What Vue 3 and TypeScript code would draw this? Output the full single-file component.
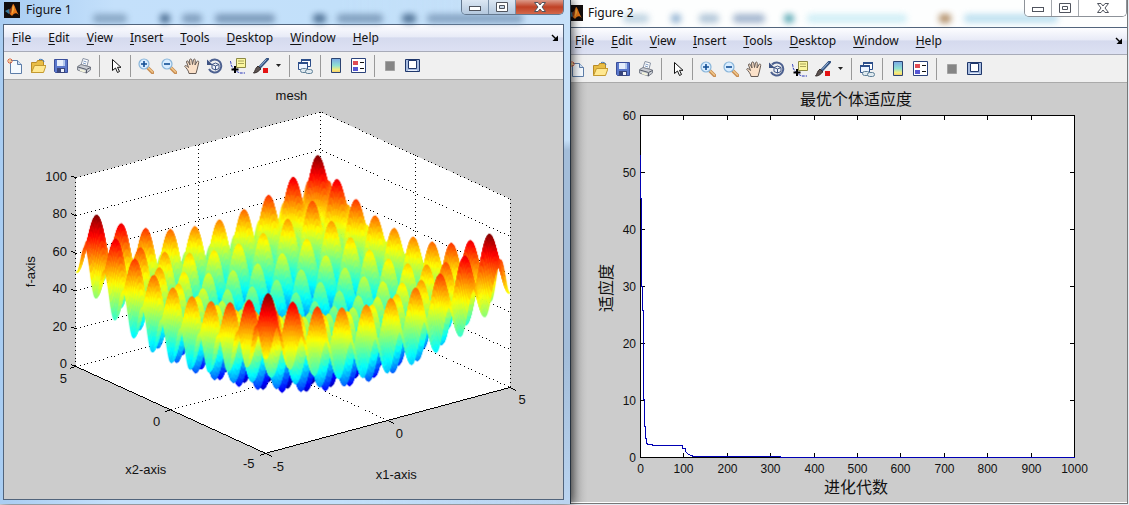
<script setup lang="ts">
import { onMounted, ref } from 'vue'

interface Smudge { x: number; w: number; c: string }
interface Fig {
  id: string
  title: string
  active: boolean
  smudges: Smudge[]
}

const figures: Fig[] = [
  {
    id: 'one', title: 'Figure 1', active: true,
    smudges: [
      { x: 90, w: 34, c: '#7f9ebc' }, { x: 157, w: 10, c: '#33567c' }, { x: 179, w: 20, c: '#7593b3' },
      { x: 212, w: 60, c: '#6f8dae' }, { x: 310, w: 13, c: '#3d6085' }, { x: 334, w: 46, c: '#7593b3' },
      { x: 399, w: 14, c: '#3d6085' }, { x: 424, w: 96, c: '#7c9aba' },
    ],
  },
  {
    id: 'two', title: 'Figure 2', active: false,
    smudges: [
      { x: 56, w: 26, c: '#b5cddd' }, { x: 104, w: 10, c: '#7fa6cb' }, { x: 132, w: 20, c: '#a5bdd2' },
      { x: 166, w: 32, c: '#93a9c6' }, { x: 217, w: 10, c: '#3f9aa8' }, { x: 240, w: 100, c: '#c9ecf5' },
      { x: 372, w: 12, c: '#a47a4c' }, { x: 397, w: 94, c: '#b4dcee' },
    ],
  },
]

const menus = ['File', 'Edit', 'View', 'Insert', 'Tools', 'Desktop', 'Window', 'Help']
const tools = [
  'New Figure', 'Open File', 'Save Figure', 'Print Figure', '|', 'Edit Plot', '|', 'Zoom In', 'Zoom Out', 'Pan',
  'Rotate 3D', 'Data Cursor', 'Brush', 'Brush options', '|', 'Link Plot', '|', 'Insert Colorbar', 'Insert Legend', '|',
  'Hide Plot Tools', 'Show Plot Tools',
]

// Oblique view of the 10 x 10 x 100 axes box.
const px = (x: number, y: number) => 266 + 24.5 * (x + 5) - 19 * (y + 5)
const py = (x: number, y: number, z: number) => 454 - 6.6 * (x + 5) - 8.7 * (y + 5) - 1.89 * z
const pt = (x: number, y: number, z: number) => `${px(x, y)},${py(x, y, z)}`
const box = [pt(-5, 5, 0), pt(-5, 5, 100), pt(5, 5, 100), pt(5, -5, 100), pt(5, -5, 0), pt(-5, -5, 0)].join(' ')

const grid: string[] = []
for (let z = 0; z <= 100; z += 20) grid.push(`M${pt(-5, 5, z)}L${pt(5, 5, z)}L${pt(5, -5, z)}`)
for (const x of [-5, 0, 5]) grid.push(`M${pt(x, 5, 0)}L${pt(x, 5, 100)}`)
for (const y of [0, -5]) grid.push(`M${pt(5, y, 0)}L${pt(5, y, 100)}`)
grid.push(`M${pt(0, 5, 0)}L${pt(0, -5, 0)}`, `M${pt(-5, 0, 0)}L${pt(5, 0, 0)}`)
const gridPath = grid.join('')

const ticks3d: string[] = []
for (let z = 0; z <= 100; z += 20) ticks3d.push(`M${pt(-5, 5, z)}l-5,-2`)
for (const v of [-5, 0, 5]) ticks3d.push(`M${pt(-5, v, 0)}l-6,2`, `M${pt(v, -5, 0)}l6,3`)
const tickPath = ticks3d.join('')
const zLabels = [0, 20, 40, 60, 80, 100].map(z => ({ z, y: 369 - 1.88 * z }))

const rastrigin = (x: number, y: number) =>
  20 + x * x + y * y - 10 * (Math.cos(2 * Math.PI * x) + Math.cos(2 * Math.PI * y))

function jet(t: number): string {
  const c = (o: number) => Math.round(255 * Math.max(0, Math.min(1, 1.5 - Math.abs(4 * t - o))))
  return `rgb(${c(3)},${c(2)},${c(1)})`
}

const surfaces = ref<HTMLCanvasElement[]>([])
onMounted(() => {
  const ctx = surfaces.value[0]?.getContext('2d')
  if (!ctx) return
  ctx.translate(-4, -80)
  ctx.lineWidth = 0.7
  const n = 200
  const at = (i: number) => -5 + (10 * i) / n
  for (let i = n - 1; i >= 0; i--) {
    for (let j = n - 1; j >= 0; j--) {
      const corners = [[i, j], [i + 1, j], [i + 1, j + 1], [i, j + 1]]
      ctx.beginPath()
      let sum = 0
      corners.forEach(([a, b], k) => {
        const x = at(a), y = at(b), z = rastrigin(x, y)
        sum += z
        if (k) ctx.lineTo(px(x, y), py(x, y, z))
        else ctx.moveTo(px(x, y), py(x, y, z))
      })
      ctx.closePath()
      const color = jet(sum / 4 / 80.7)
      ctx.fillStyle = color
      ctx.strokeStyle = color
      ctx.fill()
      ctx.stroke()
    }
  }
})

const xTicks = Array.from({ length: 11 }, (_, i) => ({ v: i * 100, x: Math.round(640 + i * 43.4) + 0.5 }))
const yTicks = Array.from({ length: 7 }, (_, i) => ({ v: i * 10, y: 457.5 - i * 57 }))
const tick2d = xTicks.map(t => `M${t.x},115.5v4M${t.x},457.5v-5`).join('') +
  yTicks.map(t => `M640.5,${t.y}h4M1074.5,${t.y}h-5`).join('')
const curve = 'M640.5,155V198H641.5V286H642.5V310H643.5V399H644.5V426H645.5V438H646.5V443L648,444.5H652V445.5H682.5V448.5H685.5V451.5L688,454L691,455.5L694,456.5H780.5V457.5H1074.5'
</script>

<template>
  <main class="desktop">
    <section v-for="(fig, n) in figures" :key="fig.id" class="window" :class="fig.id" :aria-label="fig.title">
      <header class="titlebar">
        <i v-for="s in fig.smudges" :key="s.x" class="smudge" :style="{ left: s.x + 'px', width: s.w + 'px', background: s.c }"></i>
        <svg class="logo" viewBox="0 0 16 16" aria-hidden="true">
          <rect width="16" height="16" fill="#120d0c" />
          <path d="M1 9 5 7 8 10 5 12Z" fill="#36799c" />
          <path d="M5 8 7 6 9 2 10 3 8 11 6 13Z" fill="#8d3a18" />
          <path d="M9 2C11 3 12 9 15 13 12 10 10 11 8 14L6 12C8 10 8 5 9 2Z" fill="#e97818" />
          <path d="M9 3C10 6 10 9 8 12 9 9 8 6 9 3Z" fill="#ffd25a" />
        </svg>
        <h1>{{ fig.title }}</h1>
        <div class="controls">
          <button type="button" aria-label="Minimize">
            <svg width="14" height="10"><rect x="1.5" y="4.5" width="11" height="4" fill="#fff" stroke="#50545e" /></svg>
          </button>
          <button type="button" aria-label="Maximize">
            <svg width="14" height="10"><path d="M1.500.5h11v9h-11zM4.500 3.500h5v3h-5z" fill="#fff" stroke="#50545e" fill-rule="evenodd" /></svg>
          </button>
          <button type="button" class="close" aria-label="Close">
            <svg width="14" height="10"><path d="M1.500.5h3.500l2 2.500 2-2.500h3.500L9 5l3.500 4.500H9L7 7 5 9.500H1.500L5 5z" fill="#fff" stroke="#50545e" /></svg>
          </button>
        </div>
      </header>

      <div class="client">
        <nav class="menubar" aria-label="Menu">
          <button v-for="m in menus" :key="m" type="button"><u>{{ m[0] }}</u>{{ m.slice(1) }}</button>
          <svg class="dock" width="8" height="8" aria-hidden="true"><path d="M1 1 5 5" stroke="#000" stroke-width="1.500" /><path d="M7 1.500V7H1.500z" fill="#000" /></svg>
        </nav>

        <div class="toolbar" role="toolbar" aria-label="Figure tools">
          <template v-for="(t, i) in tools" :key="i">
            <i v-if="t === '|'" class="sep"></i>
            <button v-else type="button" :aria-label="t" :class="{ caret: t === 'Brush options' }">
              <svg v-if="t === 'New Figure'" viewBox="0 0 16 16">
                <path d="M3.500 2.500h7l4 4v9h-11z" fill="#f5faff" stroke="#5d7da8" />
                <path d="M10.500 2.500v4h4" fill="#cfe0f3" stroke="#5d7da8" />
                <path d="M3 0v6M0 3h6M1 1l4 4M5 1 1 5" stroke="#e0693f" /><circle cx="3" cy="3" r="1" fill="#fff3a0" />
              </svg>
              <svg v-else-if="t === 'Open File'" viewBox="0 0 16 16">
                <path d="M1.500 14.500V4.500h5l1-2h6v11z" fill="#e9bd45" stroke="#b98b25" />
                <path d="M9 1.500q4-1 5 2.500" fill="none" stroke="#477ab8" />
                <path d="M1.500 14.500 4.500 7.500H16L13.500 14.500z" fill="#ffe891" stroke="#c49a30" />
              </svg>
              <svg v-else-if="t === 'Save Figure'" viewBox="0 0 16 16">
                <path d="M1.500 1.500h13v13h-12l-1-1z" fill="#5b78cc" stroke="#3a4e9a" />
                <path d="M4 2h8v6H4z" fill="#e6eefc" /><path d="M10 2h2v6h-2z" fill="#b5c9ee" />
                <path d="M4 10h8v5H4z" fill="#39457c" /><path d="M8 11h3v3H8z" fill="#eef2fb" />
              </svg>
              <svg v-else-if="t === 'Print Figure'" viewBox="0 0 16 16">
                <path d="M5 7 7 .5 12.500 2 11 8z" fill="#fff" stroke="#8a93a4" />
                <path d="M7.500 3l3 1M7 5l3 1" stroke="#7d9ac2" />
                <path d="M1.500 8.500 5 6.500 14.500 9v3l-4 3-9-3z" fill="#c9ccd3" stroke="#7d828d" />
                <path d="M2 9l8.500 2.500 4-2M10.500 12v3" fill="none" stroke="#555b68" /><path d="M4 12l5 1.500" stroke="#f3f3dc" stroke-width="2" />
              </svg>
              <svg v-else-if="t === 'Edit Plot'" viewBox="0 0 16 16">
                <path d="M5.500 1.500v11l3-2.500 2 4.500 2-1-2-4.200h3.500z" fill="#fff" stroke="#111" />
              </svg>
              <svg v-else-if="t === 'Zoom In' || t === 'Zoom Out'" viewBox="0 0 16 16">
                <path d="M9.500 9.500 14.500 14.500" stroke="#c78b50" stroke-width="3.500" stroke-linecap="round" />
                <path d="M9.500 9 14.500 14" stroke="#f1c78a" stroke-width="1.500" stroke-linecap="round" />
                <circle cx="6" cy="6" r="5" fill="#d9edff" stroke="#8ab6da" stroke-width="1.200" />
                <path :d="t === 'Zoom In' ? 'M3 6h6M6 3v6' : 'M3 6h6'" stroke="#114d94" stroke-width="1.600" />
              </svg>
              <svg v-else-if="t === 'Pan'" viewBox="0 0 16 16">
                <path d="M5 15.500C4.500 12 2 10 .7 8.300 1 7 2.500 7.500 4.500 9.500L2.500 4C2.500 2.500 4 2.500 4.500 4L6 7 5.500 2C6 .5 7.500.6 7.800 2L8.500 6.500 9.500 1.800C10 .5 11.500 1 11.300 2.500L11 7 13 3.500C13.500 2.500 15 3 14.700 4.500L13.500 10 12 15.500Z" fill="#fbe1c9" stroke="#665b55" />
              </svg>
              <svg v-else-if="t === 'Rotate 3D'" viewBox="0 0 16 16">
                <path d="M3 3.500A6.500 6.500 0 1 1 2 11" fill="none" stroke="#4d6190" stroke-width="2" />
                <path d="M0 1.500V7h6z" fill="#3e5383" />
                <path d="M5 6.500 8.500 5 12 6.500v4L8.500 12 5 10.500zM5 6.500 8.500 8 12 6.500M8.500 8v4" fill="#eff3fa" stroke="#3e5383" />
              </svg>
              <svg v-else-if="t === 'Data Cursor'" viewBox="0 0 16 16">
                <path d="M0 3q1 1 1 3t3 5 6 4h5" fill="none" stroke="#2735b9" stroke-dasharray="3 1" />
                <path d="M6.500.5h9v9h-9z" fill="#fbf7a0" stroke="#8d8a45" /><path d="M8 3h6M8 5.500h6" stroke="#aaa55c" />
                <path d="M5 8v7M1.500 11.500h7" stroke="#000" stroke-width="2" />
              </svg>
              <svg v-else-if="t === 'Brush'" viewBox="0 0 16 16">
                <path d="M14.500 1 7 9" stroke="#31507e" stroke-width="3" stroke-linecap="round" /><path d="M13.500 1.500 7 8.500" stroke="#9dbbe0" />
                <path d="M5 8 8 11C6 12 5 15 .5 15 2.500 13 2 10 5 8Z" fill="#5c5250" stroke="#352d2c" />
                <path d="M10 10h5v5h-5z" fill="#e41313" />
              </svg>
              <svg v-else-if="t === 'Brush options'" viewBox="0 0 6 4"><path d="M0 0h5L2.500 3z" fill="#222" /></svg>
              <svg v-else-if="t === 'Link Plot'" viewBox="0 0 16 16">
                <path d="M4.500 1.500h9v7h-9z" fill="#fff" stroke="#2c4e8a" /><path d="M4 2h10" stroke="#2c4e8a" stroke-width="2" />
                <path d="M1.500 4.500h9v7h-9z" fill="#eef5ff" stroke="#2c4e8a" /><path d="M1 5h10" stroke="#2c4e8a" stroke-width="2" />
                <rect x="3.500" y="10.500" width="7" height="4" rx="2" fill="#dfe9ef" stroke="#5f8098" />
                <rect x="8.500" y="11.500" width="7" height="4" rx="2" fill="#dfe9ef" stroke="#5f8098" />
              </svg>
              <svg v-else-if="t === 'Insert Colorbar'" viewBox="0 0 16 16">
                <defs><linearGradient :id="'bar' + n" x2="0" y2="1"><stop offset="0" stop-color="#79a7e6" /><stop offset=".5" stop-color="#8fe0d2" /><stop offset=".8" stop-color="#f4ee7c" /><stop offset="1" stop-color="#f4c667" /></linearGradient></defs>
                <path d="M3.500.5h9v14h-9z" :fill="`url(#bar${n})`" stroke="#2c4471" />
              </svg>
              <svg v-else-if="t === 'Insert Legend'" viewBox="0 0 16 16">
                <path d="M.5.5h14v14H.5z" fill="#fff" stroke="#2b437b" />
                <path d="M2 3h5v4H2z" fill="#df4b55" /><path d="M2 9h5v4H2z" fill="#5656d3" /><path d="M9 4.500h4M9 10.500h4" stroke="#111" />
              </svg>
              <svg v-else-if="t === 'Hide Plot Tools'" viewBox="0 0 16 16"><path d="M3.500 3.500h9v9h-9z" fill="#858585" stroke="#a2a2a2" /></svg>
              <svg v-else viewBox="0 0 16 16">
                <path d="M.5 1.500h14v12H.5z" fill="#a9bde0" stroke="#1f376b" />
                <path d="M3.500 2.500h8v8h-8z" fill="#fff" stroke="#1f376b" /><path d="M3 12.500h9" stroke="#e9f0fc" />
              </svg>
            </button>
          </template>
        </div>

        <div v-if="fig.active" class="plot">
          <svg viewBox="4 80 560 420" role="img" aria-label="mesh">
            <polygon :points="box" fill="#fff" />
            <path :d="gridPath" class="dots" />
            <path :d="`M${pt(-5, 5, 0)}L${pt(-5, -5, 0)}L${pt(5, -5, 0)}`" class="line" />
            <path :d="tickPath" class="line" />
            <text x="292" y="100" class="mid">mesh</text>
            <text v-for="l in zLabels" :key="l.z" x="67" :y="l.y" class="end">{{ l.z }}</text>
            <text x="67" y="384" class="end">5</text>
            <text x="157" y="427" class="mid">0</text>
            <text x="255" y="469" class="end">-5</text>
            <text x="273" y="472">-5</text>
            <text x="400" y="439" class="mid">0</text>
            <text x="523" y="405" class="mid">5</text>
            <text x="146" y="475" class="mid">x2-axis</text>
            <text x="397" y="480" class="mid">x1-axis</text>
            <text transform="translate(35 272) rotate(-90)" class="mid">f-axis</text>
          </svg>
          <canvas ref="surfaces" width="560" height="420"></canvas>
        </div>
        <div v-else class="plot">
          <svg viewBox="567 83 560 419" role="img" aria-label="最优个体适应度">
            <rect x="640.5" y="115.5" width="434" height="342" fill="#fff" stroke="#000" shape-rendering="crispEdges" />
            <path :d="tick2d" class="line" />
            <path :d="curve" class="curve" />
            <text v-for="t in xTicks" :key="t.v" :x="t.x" y="473" class="mid">{{ t.v }}</text>
            <text v-for="t in yTicks" :key="t.v" x="636" :y="t.y + 4" class="end">{{ t.v }}</text>
            <text x="856" y="105" class="mid han">最优个体适应度</text>
            <text x="856" y="493" class="mid han">进化代数</text>
            <text transform="translate(612 288) rotate(-90)" class="mid han">适应度</text>
          </svg>
        </div>
      </div>
    </section>
  </main>
</template>

<style>
body { margin: 0; background: #e4ebf3; }
</style>

<style scoped>
.desktop {
  display: grid;
  grid-template-columns: 571fr 558fr;
  align-items: start;
  min-height: 100vh;
  overflow: hidden;
  font-family: "Noto Sans", "Open Sans", "Noto Sans CJK SC", sans-serif;
  font-size: 12px;
  color: #111;
}
.window { box-sizing: border-box; position: relative; }
.one {
  z-index: 1;
  padding: 0 6px 4px 3px;
  background: linear-gradient(90deg, #a9cdf2, #c4e0fb 20%, #c2e0fa 60%, transparent 99%), linear-gradient(#c6e0f8 0 140px, #a3bdd9 150px 70%, #bad4f0);
  border-right: 1px solid #26323f;
  box-shadow: 1px 0 10px rgba(0, 0, 0, .75);
}
.two {
  margin-left: -8px;
  margin-right: 1px;
  padding-left: 4px;
  padding-bottom: 1px;
  background: #fdfefe;
  border-right: 1px solid #777;
  border-bottom: 1px solid #777;
}
.titlebar { position: relative; display: flex; height: 24px; }
.two .titlebar { height: 27px; }
.smudge { position: absolute; top: 14px; height: 9px; border-radius: 4px; filter: blur(3px); opacity: .85; }
.logo { position: relative; width: 16px; height: 16px; margin: 2px 0 0 1px; }
.two .logo { margin: 5px 0 0; }
h1 { position: relative; margin: 0 0 0 6px; font-size: 12px; font-weight: 400; line-height: 20px; }
.two h1 { line-height: 26px; margin-left: 5px; }
.controls {
  position: relative;
  display: flex;
  height: 14px;
  margin-left: auto;
  border: 1px solid #64788f;
  border-top: 0;
  border-radius: 0 0 5px 5px;
  overflow: hidden;
}
.two .controls { height: 16px; border-color: #8d9299; }
button { padding: 0; border: 0; background: none; color: inherit; font: inherit; }
.controls button {
  display: flex;
  align-items: center;
  justify-content: center;
  width: 27px;
  border-right: 1px solid #7a90a8;
  background: linear-gradient(#dce7f3, #b4c8de);
}
.controls .close { width: 47px; border: 0; background: linear-gradient(#dc9a89, #c04125 50%, #d3694c); }
.two .controls button { background: #fff; border-color: #a5a9ae; }
.client { border: 1px solid #51647c; background: #ccc; }
.two .client { border-width: 1px 0 0; }
.menubar {
  display: flex;
  align-items: center;
  gap: 17px;
  height: 26px;
  padding: 0 4px 0 8px;
  background: linear-gradient(#fdfdff, #e8ebf7 45%, #d5daee 50%, #dde1f3);
  border-bottom: 1px solid #a8abb8;
}
.menubar button { line-height: 20px; }
.menubar u { text-underline-offset: 2px; }
.dock { margin-left: auto; }
.toolbar {
  display: flex;
  align-items: center;
  gap: 7px;
  height: 27px;
  padding-left: 3px;
  background: #f0f0f0;
  border-bottom: 1px solid #aaa;
}
.two .toolbar { padding-left: 2px; }
.toolbar button { width: 16px; height: 16px; flex: none; }
.toolbar button svg { display: block; width: 16px; height: 16px; }
.toolbar .caret { width: 6px; height: 4px; }
.toolbar .caret svg { width: 6px; height: 4px; }
.sep { width: 1px; height: 22px; background: #999; }
.plot { display: grid; }
.plot svg, .plot canvas { grid-area: 1 / 1; display: block; width: 100%; height: auto; }
.two .plot { background: linear-gradient(90deg, #aaa, #ccc 20px); }
text { font: 13px "Liberation Sans", Arial, sans-serif; fill: #111; }
.two text { font-size: 12px; }
.two .han { font: 16px "Noto Sans CJK SC", sans-serif; }
.mid { text-anchor: middle; }
.end { text-anchor: end; }
.line { fill: none; stroke: #000; shape-rendering: crispEdges; }
.dots { fill: none; stroke: #000; stroke-dasharray: 1 3; shape-rendering: crispEdges; }
.curve { fill: none; stroke: #0000b4; shape-rendering: crispEdges; }
</style>
